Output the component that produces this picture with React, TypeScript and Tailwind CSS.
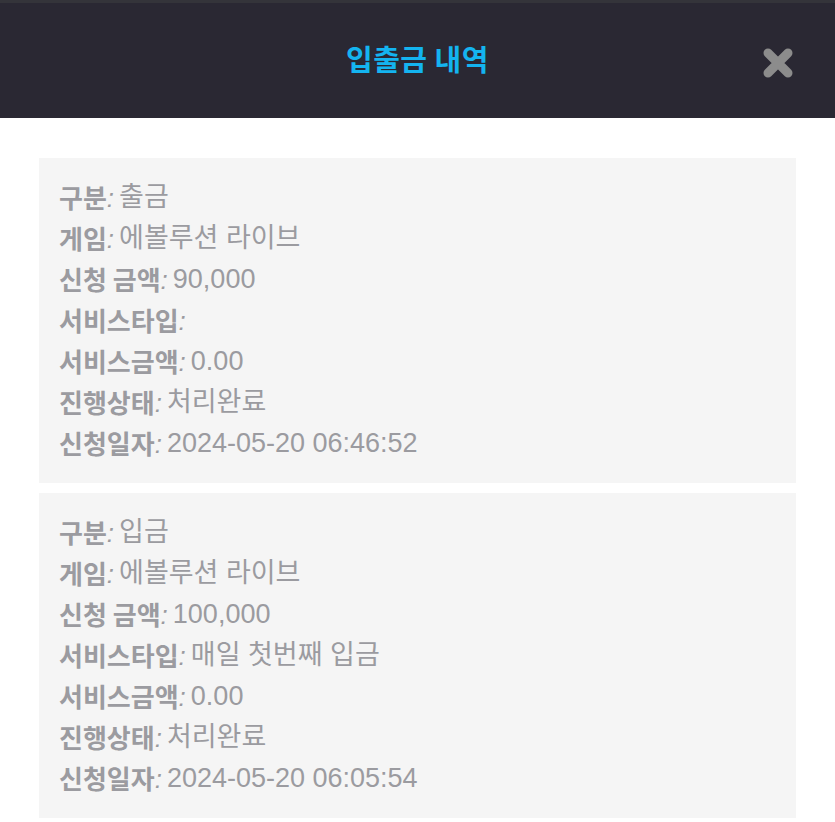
import React from "react";

type Row = { label: string; value: string };

const cards: Row[][] = [
  [
    { label: "구분", value: "출금" },
    { label: "게임", value: "에볼루션 라이브" },
    { label: "신청 금액", value: "90,000" },
    { label: "서비스타입", value: "" },
    { label: "서비스금액", value: "0.00" },
    { label: "진행상태", value: "처리완료" },
    { label: "신청일자", value: "2024-05-20 06:46:52" },
  ],
  [
    { label: "구분", value: "입금" },
    { label: "게임", value: "에볼루션 라이브" },
    { label: "신청 금액", value: "100,000" },
    { label: "서비스타입", value: "매일 첫번째 입금" },
    { label: "서비스금액", value: "0.00" },
    { label: "진행상태", value: "처리완료" },
    { label: "신청일자", value: "2024-05-20 06:05:54" },
  ],
];

export default function App() {
  return (
    <div
      className="w-[835px] h-[822px] bg-white overflow-hidden"
      style={{ fontFamily: '"Liberation Sans", "Noto Sans CJK KR", sans-serif' }}
    >
      <div className="h-[3px] bg-[#34343a]" />
      <div className="relative h-[115px] bg-[#2a2833] flex items-center justify-center">
        <h1
          className="text-[29px] font-bold text-[#14b4f0] tracking-[0.5px] -mt-[4px]"
          style={{ fontFamily: '"Noto Sans CJK KR", sans-serif' }}
        >
          입출금 내역
        </h1>
        <button className="absolute right-[40px] top-[43px] w-[34px] h-[34px] flex items-center justify-center">
          <svg width="34" height="34" viewBox="0 0 34 34">
            <path
              d="M7 7 L27 27 M27 7 L7 27"
              stroke="#8c8c8c"
              strokeWidth="9"
              strokeLinecap="round"
            />
          </svg>
        </button>
      </div>
      <div className="px-[39px] pt-[40px] flex flex-col gap-[10px]">
        {cards.map((rows, i) => (
          <div key={i} className="bg-[#f5f5f5] pl-[20px] pt-[18px] pb-[20px] h-[325px]">
            {rows.map((r, j) => (
              <div
                key={j}
                className="h-[41px] flex items-center text-[26px] leading-none text-[#9b9ba0] whitespace-nowrap"
              >
                <span className="font-bold" style={{ fontFamily: '"Noto Sans CJK KR", sans-serif' }}>
                  {r.label}
                </span>
                <span className="italic mr-[5px] mt-[2px]">:</span>
                <span className="text-[27px] mt-[2px]">{r.value}</span>
              </div>
            ))}
          </div>
        ))}
      </div>
    </div>
  );
}
